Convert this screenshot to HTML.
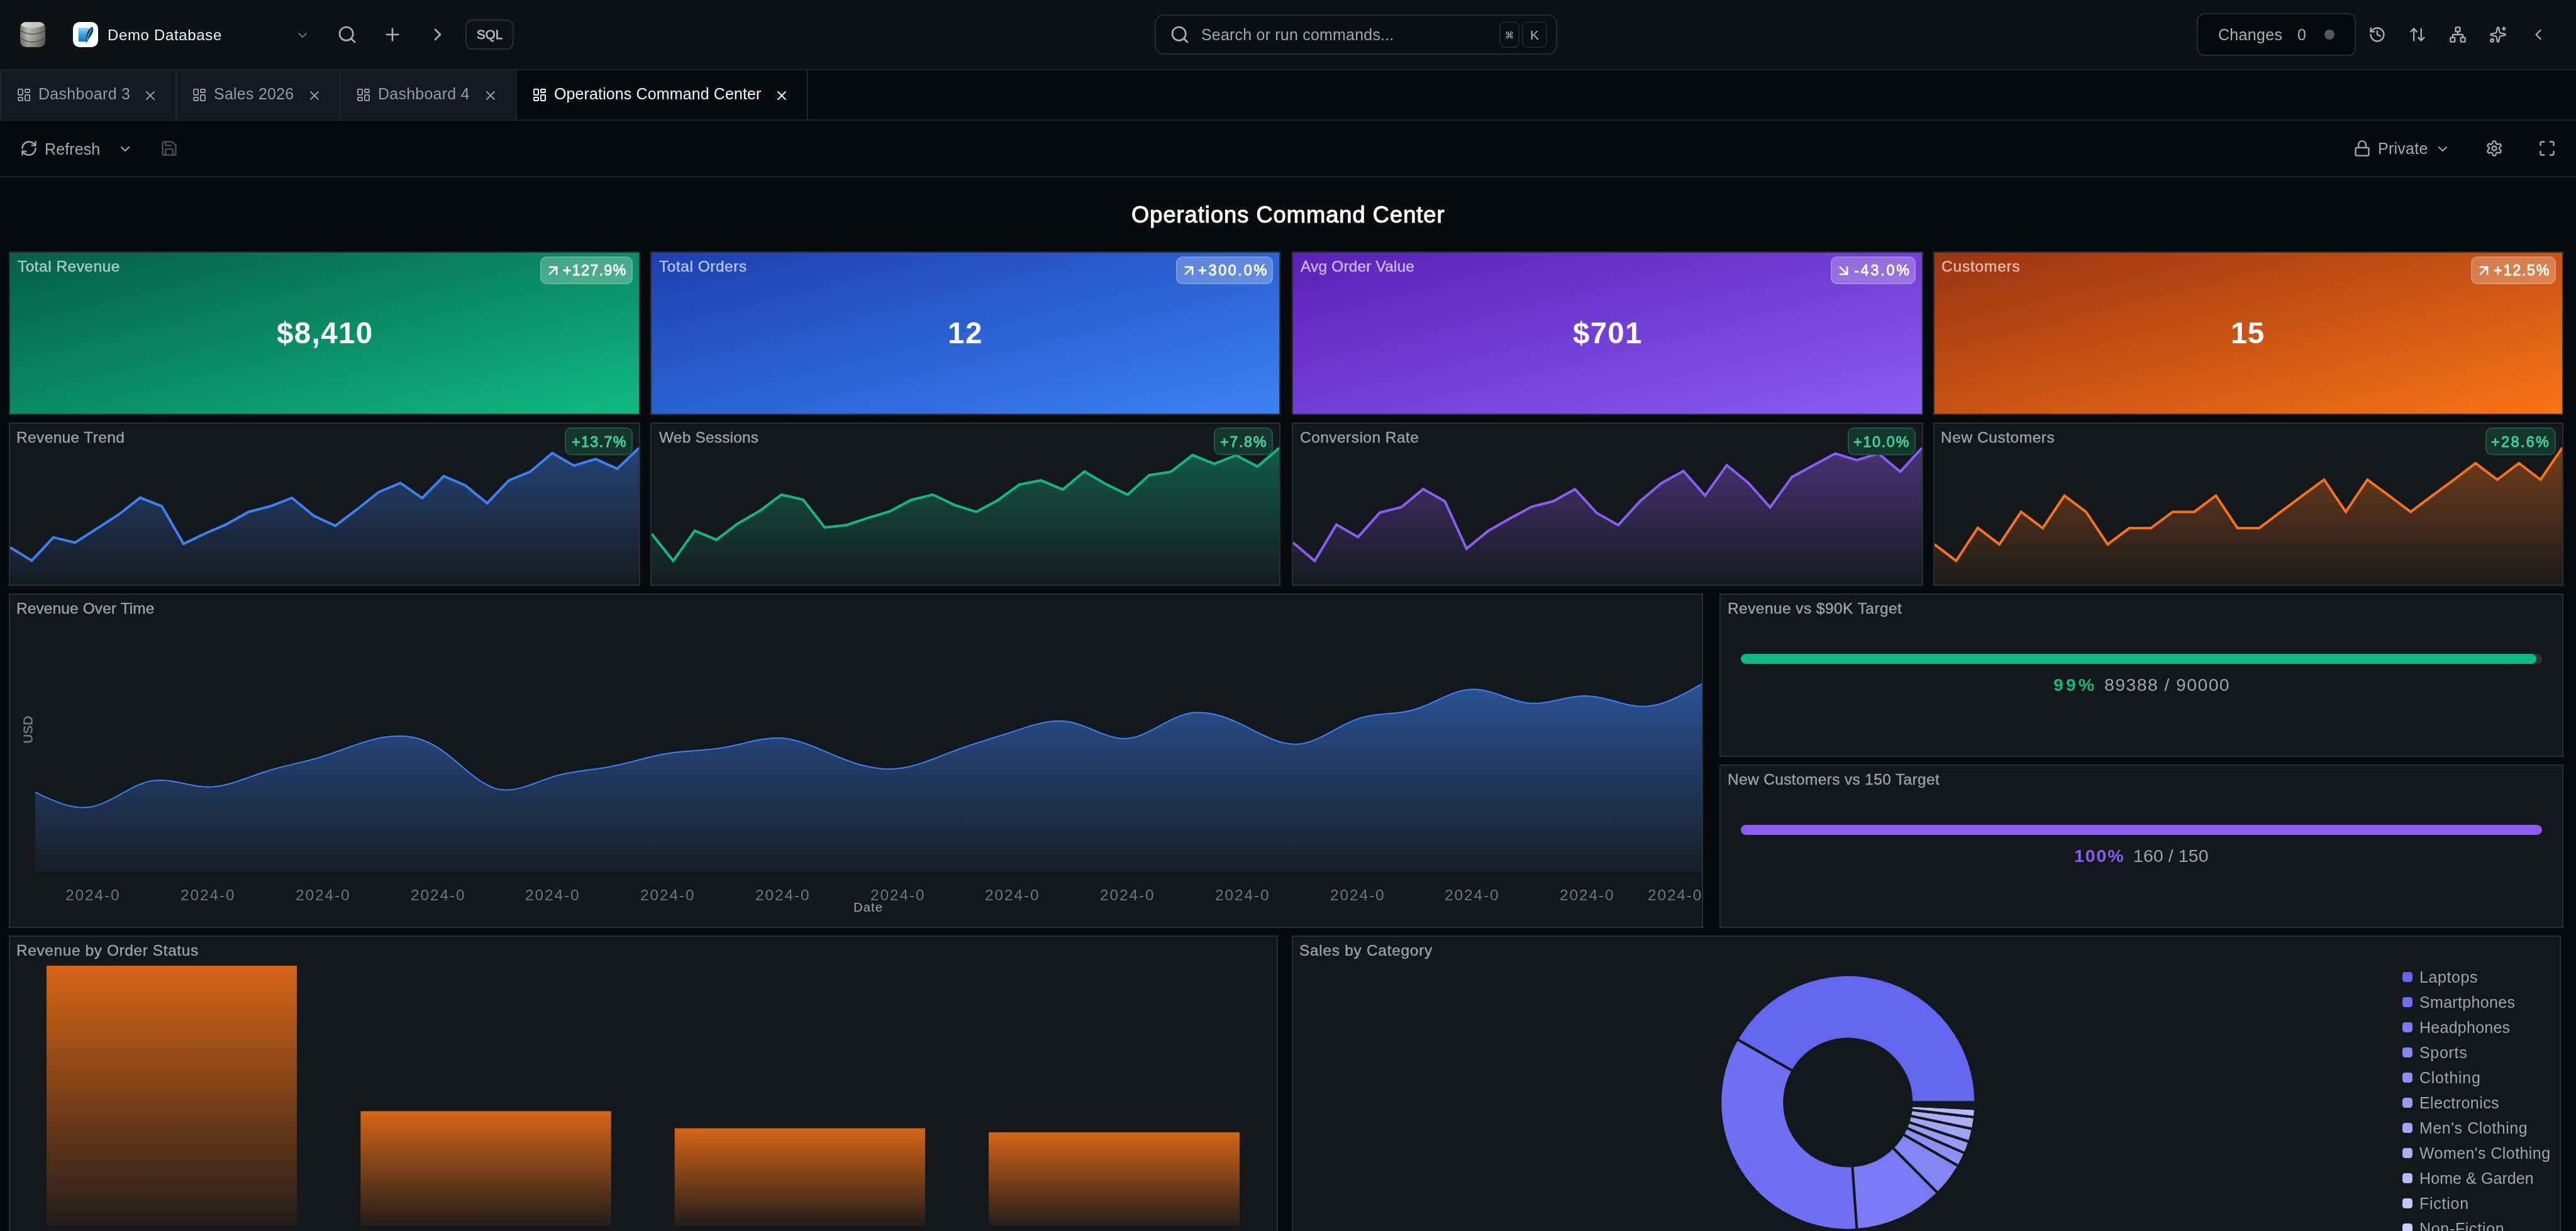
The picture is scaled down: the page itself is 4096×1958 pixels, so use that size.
<!DOCTYPE html>
<html lang="en">
<head>
<meta charset="utf-8">
<title>Operations Command Center</title>
<style>
html,body{margin:0;padding:0;}
body{width:4096px;height:1958px;overflow:hidden;background:#090a0c;font-family:"Liberation Sans",sans-serif;position:relative;}
.t{position:absolute;white-space:nowrap;display:block;will-change:transform;}
.ic{position:absolute;display:block;overflow:visible;}
.abs{position:absolute;box-sizing:border-box;}
.card{position:absolute;box-sizing:border-box;border:2px solid #2a2f36;background:#15181b;overflow:hidden;}
.badge{position:absolute;box-sizing:border-box;border-radius:10px;}
.kbadge{background:rgba(255,255,255,.25);border:2px solid rgba(255,255,255,.16);}
.sbadge{background:#15362d;border:2px solid #1c5743;}
svg{display:block;}
h1,h2{margin:0;font-weight:400;}
@media (max-width:4000px){html{zoom:tan(atan2(100vw,4096px));}}
</style>
</head>
<body>

<header class="abs" style="left:0;top:0;width:4096px;height:112px;background:#0f1113;border-bottom:2px solid #1f242a;">
<svg class="ic" style="left:32px;top:35px" width="40" height="40" viewBox="0 0 40 40">
<defs><linearGradient id="cylb" x1="0" y1="0" x2="1" y2="0"><stop offset="0" stop-color="#77776f"/><stop offset=".3" stop-color="#bdbdb6"/><stop offset=".62" stop-color="#9d9d96"/><stop offset="1" stop-color="#63635d"/></linearGradient>
<linearGradient id="cylt" x1="0" y1="0" x2="1" y2="0"><stop offset="0" stop-color="#dadad5"/><stop offset="1" stop-color="#b9b9b3"/></linearGradient>
<linearGradient id="cyls" x1="0" y1="0" x2="0" y2="1"><stop offset="0" stop-color="#000" stop-opacity="0"/><stop offset=".6" stop-color="#000" stop-opacity=".04"/><stop offset="1" stop-color="#000" stop-opacity=".2"/></linearGradient>
<clipPath id="cylc"><rect x="0" y="0" width="40" height="40" rx="9.5"/></clipPath></defs>
<g clip-path="url(#cylc)">
<rect x="0" y="0" width="40" height="40" fill="url(#cylb)"/>
<rect x="0" y="0" width="40" height="40" fill="url(#cyls)"/>
<path d="M0 0 H40 V4.6 Q20 15.4 0 4.6z" fill="url(#cylt)"/>
<path d="M0 13.6 Q20 25.4 40 13.1" fill="none" stroke="#4a4a45" stroke-width="1.2"/>
<path d="M0 25.3 Q20 38.8 40 24.7" fill="none" stroke="#4a4a45" stroke-width="1.2"/>
</g>
</svg>
<svg class="ic" style="left:116px;top:35px" width="40" height="40" viewBox="0 0 40 40">
<defs><linearGradient id="sqb" x1="0" y1="0" x2="0" y2="1"><stop offset="0" stop-color="#8ad6fb"/><stop offset=".55" stop-color="#2c9be0"/><stop offset="1" stop-color="#0b78c6"/></linearGradient></defs>
<rect width="40" height="40" rx="10.5" fill="#fff"/>
<path d="M10 9.3 H25.5 L22.2 31.2 H10 Q8.7 31.2 8.7 29.9 V10.6 Q8.7 9.3 10 9.3z" fill="url(#sqb)"/>
<path d="M30.4 7.8 C33.6 9.4 32.4 16 29.2 21 C27 24.4 24.4 27.4 22.6 31.4 L21.5 33.6 C20.6 29 20.8 23.6 22.2 18.6 C23.6 13.6 26.6 9 30.4 7.8z" fill="#0b4468"/>
<path d="M30 10.6 C27 15 24.2 21.4 22.4 29.4" fill="none" stroke="#d9effa" stroke-width=".8"/>
</svg>
<span class="t" style="left:171.2px;top:44.2px;font-size:24px;line-height:24px;color:#f2f3f5;letter-spacing:0.65px;">Demo Database</span>
<svg class="ic" style="left:468.5px;top:43.5px" width="24" height="24" viewBox="0 0 24 24" fill="none" stroke="#6b7079" stroke-width="2" stroke-linecap="round" stroke-linejoin="round"><path d="m6 9 6 6 6-6"/></svg>
<svg class="ic" style="left:536.0px;top:39.0px" width="32" height="32" viewBox="0 0 24 24" fill="none" stroke="#aaaeb5" stroke-width="2" stroke-linecap="round" stroke-linejoin="round"><circle cx="11" cy="11" r="8"/><path d="m21 21-4.3-4.3"/></svg>
<svg class="ic" style="left:608.0px;top:39.0px" width="32" height="32" viewBox="0 0 24 24" fill="none" stroke="#aaaeb5" stroke-width="2" stroke-linecap="round" stroke-linejoin="round"><path d="M5 12h14"/><path d="M12 5v14"/></svg>
<svg class="ic" style="left:680.0px;top:39.0px" width="32" height="32" viewBox="0 0 24 24" fill="none" stroke="#aaaeb5" stroke-width="2" stroke-linecap="round" stroke-linejoin="round"><path d="m9 18 6-6-6-6"/></svg>
<div class="abs" style="left:740px;top:31px;width:77px;height:48px;border:2px solid #2a2f36;border-radius:11px;"></div>
<span class="t" style="left:757.8px;top:45.1px;font-size:20.5px;line-height:20.5px;color:#b4b8be;letter-spacing:0.08px;-webkit-text-stroke:.8px #b4b8be;">SQL</span>
<div class="abs" style="left:1836px;top:23px;width:640px;height:64px;border:2px solid #262b31;border-radius:15px;background:#0d0e10;"></div>
<svg class="ic" style="left:1860.0px;top:39.0px" width="32" height="32" viewBox="0 0 24 24" fill="none" stroke="#aaaeb5" stroke-width="2" stroke-linecap="round" stroke-linejoin="round"><circle cx="11" cy="11" r="8"/><path d="m21 21-4.3-4.3"/></svg>
<span class="t" style="left:1909.5px;top:43.3px;font-size:25px;line-height:25px;color:#a0a5ac;letter-spacing:0.20px;">Search or run commands...</span>
<div class="abs" style="left:2384px;top:34px;width:32px;height:42px;border:2px solid #22262c;border-radius:9px;"></div>
<div class="abs" style="left:2420px;top:34px;width:40px;height:42px;border:2px solid #22262c;border-radius:9px;"></div>
<span class="t" style="left:1900.2px;width:1000px;text-align:center;top:48.5px;font-size:14px;line-height:14px;color:#b4b8be;font-family:'DejaVu Sans',sans-serif;">⌘</span>
<span class="t" style="left:1940.3px;width:1000px;text-align:center;top:44.7px;font-size:21px;line-height:21px;color:#b4b8be;">K</span>
<div class="abs" style="left:3493px;top:21px;width:253px;height:68px;border:2px solid #262b31;border-radius:12px;background:#08090b;"></div>
<span class="t" style="left:3526.6px;top:43.2px;font-size:25px;line-height:25px;color:#aaafb6;letter-spacing:0.32px;">Changes</span>
<span class="t" style="left:3652.8px;top:43.2px;font-size:25px;line-height:25px;color:#aaafb6;">0</span>
<div class="abs" style="left:3696px;top:47px;width:16px;height:16px;border-radius:50%;background:#55585f;"></div>
<svg class="ic" style="left:3766.0px;top:41.0px" width="28" height="28" viewBox="0 0 24 24" fill="none" stroke="#aaaeb5" stroke-width="2" stroke-linecap="round" stroke-linejoin="round"><path d="M3 12a9 9 0 1 0 9-9 9.75 9.75 0 0 0-6.74 2.74L3 8"/><path d="M3 3v5h5"/><path d="M12 7v5l4 2"/></svg>
<svg class="ic" style="left:3830.0px;top:41.0px" width="28" height="28" viewBox="0 0 24 24" fill="none" stroke="#aaaeb5" stroke-width="2" stroke-linecap="round" stroke-linejoin="round"><path d="m21 16-4 4-4-4"/><path d="M17 20V4"/><path d="m3 8 4-4 4 4"/><path d="M7 4v16"/></svg>
<svg class="ic" style="left:3894.0px;top:41.0px" width="28" height="28" viewBox="0 0 24 24" fill="none" stroke="#aaaeb5" stroke-width="2" stroke-linecap="round" stroke-linejoin="round"><rect x="16" y="16" width="6" height="6" rx="1"/><rect x="2" y="16" width="6" height="6" rx="1"/><rect x="9" y="2" width="6" height="6" rx="1"/><path d="M5 16v-3a1 1 0 0 1 1-1h12a1 1 0 0 1 1 1v3"/><path d="M12 12V8"/></svg>
<svg class="ic" style="left:3958.0px;top:41.0px" width="28" height="28" viewBox="0 0 24 24" fill="none" stroke="#aaaeb5" stroke-width="2" stroke-linecap="round" stroke-linejoin="round"><path d="M11.017 2.814a1 1 0 0 1 1.966 0l1.051 5.558a2 2 0 0 0 1.594 1.594l5.558 1.051a1 1 0 0 1 0 1.966l-5.558 1.051a2 2 0 0 0-1.594 1.594l-1.051 5.558a1 1 0 0 1-1.966 0l-1.051-5.558a2 2 0 0 0-1.594-1.594l-5.558-1.051a1 1 0 0 1 0-1.966l5.558-1.051a2 2 0 0 0 1.594-1.594z"/><path d="M20 2v4"/><path d="M22 4h-4"/><circle cx="4" cy="20" r="2"/></svg>
<svg class="ic" style="left:4022.0px;top:41.0px" width="28" height="28" viewBox="0 0 24 24" fill="none" stroke="#aaaeb5" stroke-width="2" stroke-linecap="round" stroke-linejoin="round"><path d="m15 18-6-6 6-6"/></svg>
</header>
<nav class="abs" style="left:0;top:112px;width:4096px;height:80px;background:#090a0c;border-bottom:2px solid #1f242a;">
<div class="abs" style="left:0;top:0;width:2px;height:78px;background:#24282d;"></div>
<div class="abs" style="left:2px;top:0;width:279px;height:78px;background:#16191d;border-right:2px solid #24282d;"></div>
<svg class="ic" style="left:26.0px;top:27.0px" width="24" height="24" viewBox="0 0 24 24" fill="none" stroke="#969ba3" stroke-width="2" stroke-linecap="round" stroke-linejoin="round"><rect width="7" height="9" x="3" y="3" rx="1"/><rect width="7" height="5" x="14" y="3" rx="1"/><rect width="7" height="9" x="14" y="12" rx="1"/><rect width="7" height="5" x="3" y="16" rx="1"/></svg>
<span class="t" style="left:60.9px;top:24.9px;font-size:25px;line-height:25px;color:#969ba3;letter-spacing:0.28px;">Dashboard 3</span>
<svg class="ic" style="left:227.0px;top:27.5px" width="24" height="24" viewBox="0 0 24 24" fill="none" stroke="#969ba3" stroke-width="2" stroke-linecap="round" stroke-linejoin="round"><path d="M18 6 6 18"/><path d="m6 6 12 12"/></svg>
<div class="abs" style="left:281px;top:0;width:261px;height:78px;background:#16191d;border-right:2px solid #24282d;"></div>
<svg class="ic" style="left:305.0px;top:27.0px" width="24" height="24" viewBox="0 0 24 24" fill="none" stroke="#969ba3" stroke-width="2" stroke-linecap="round" stroke-linejoin="round"><rect width="7" height="9" x="3" y="3" rx="1"/><rect width="7" height="5" x="14" y="3" rx="1"/><rect width="7" height="9" x="14" y="12" rx="1"/><rect width="7" height="5" x="3" y="16" rx="1"/></svg>
<span class="t" style="left:340.4px;top:24.9px;font-size:25px;line-height:25px;color:#969ba3;letter-spacing:0.24px;">Sales 2026</span>
<svg class="ic" style="left:488.0px;top:27.5px" width="24" height="24" viewBox="0 0 24 24" fill="none" stroke="#969ba3" stroke-width="2" stroke-linecap="round" stroke-linejoin="round"><path d="M18 6 6 18"/><path d="m6 6 12 12"/></svg>
<div class="abs" style="left:542px;top:0;width:280px;height:78px;background:#16191d;border-right:2px solid #24282d;"></div>
<svg class="ic" style="left:566.0px;top:27.0px" width="24" height="24" viewBox="0 0 24 24" fill="none" stroke="#969ba3" stroke-width="2" stroke-linecap="round" stroke-linejoin="round"><rect width="7" height="9" x="3" y="3" rx="1"/><rect width="7" height="5" x="14" y="3" rx="1"/><rect width="7" height="9" x="14" y="12" rx="1"/><rect width="7" height="5" x="3" y="16" rx="1"/></svg>
<span class="t" style="left:601.0px;top:24.9px;font-size:25px;line-height:25px;color:#969ba3;letter-spacing:0.23px;">Dashboard 4</span>
<svg class="ic" style="left:768.0px;top:27.5px" width="24" height="24" viewBox="0 0 24 24" fill="none" stroke="#969ba3" stroke-width="2" stroke-linecap="round" stroke-linejoin="round"><path d="M18 6 6 18"/><path d="m6 6 12 12"/></svg>
<div class="abs" style="left:822px;top:0;width:463px;height:78px;background:#090a0c;border-right:2px solid #24282d;"></div>
<svg class="ic" style="left:846.0px;top:27.0px" width="24" height="24" viewBox="0 0 24 24" fill="none" stroke="#f5f6f7" stroke-width="2" stroke-linecap="round" stroke-linejoin="round"><rect width="7" height="9" x="3" y="3" rx="1"/><rect width="7" height="5" x="14" y="3" rx="1"/><rect width="7" height="9" x="14" y="12" rx="1"/><rect width="7" height="5" x="3" y="16" rx="1"/></svg>
<span class="t" style="left:880.8px;top:24.9px;font-size:25px;line-height:25px;color:#f5f6f7;letter-spacing:0.12px;">Operations Command Center</span>
<svg class="ic" style="left:1231.0px;top:27.5px" width="24" height="24" viewBox="0 0 24 24" fill="none" stroke="#f5f6f7" stroke-width="2" stroke-linecap="round" stroke-linejoin="round"><path d="M18 6 6 18"/><path d="m6 6 12 12"/></svg>
</nav>
<div class="abs" style="left:0;top:192px;width:4096px;height:90px;background:#090a0c;border-bottom:2px solid #1f242a;">
<svg class="ic" style="left:31.5px;top:30.0px" width="28" height="28" viewBox="0 0 24 24" fill="none" stroke="#a5aab1" stroke-width="2" stroke-linecap="round" stroke-linejoin="round"><path d="M3 12a9 9 0 0 1 9-9 9.75 9.75 0 0 1 6.74 2.74L21 8"/><path d="M21 3v5h-5"/><path d="M21 12a9 9 0 0 1-9 9 9.75 9.75 0 0 1-6.74-2.74L3 16"/><path d="M8 16H3v5"/></svg>
<span class="t" style="left:71.4px;top:32.7px;font-size:25px;line-height:25px;color:#a5aab1;letter-spacing:0.10px;">Refresh</span>
<svg class="ic" style="left:187.0px;top:32.5px" width="24" height="24" viewBox="0 0 24 24" fill="none" stroke="#a5aab1" stroke-width="2" stroke-linecap="round" stroke-linejoin="round"><path d="m6 9 6 6 6-6"/></svg>
<svg class="ic" style="left:255.0px;top:30.0px" width="28" height="28" viewBox="0 0 24 24" fill="none" stroke="#4b5058" stroke-width="2" stroke-linecap="round" stroke-linejoin="round"><path d="M15.2 3a2 2 0 0 1 1.4.6l3.8 3.8a2 2 0 0 1 .6 1.4V19a2 2 0 0 1-2 2H5a2 2 0 0 1-2-2V5a2 2 0 0 1 2-2z"/><path d="M17 21v-7a1 1 0 0 0-1-1H8a1 1 0 0 0-1 1v7"/><path d="M7 3v4a1 1 0 0 0 1 1h7"/></svg>
<svg class="ic" style="left:3741.5px;top:30.0px" width="28" height="28" viewBox="0 0 24 24" fill="none" stroke="#a5aab1" stroke-width="2" stroke-linecap="round" stroke-linejoin="round"><rect width="18" height="11" x="3" y="11" rx="2" ry="2"/><path d="M7 11V7a5 5 0 0 1 10 0v4"/></svg>
<span class="t" style="left:3781.0px;top:32.1px;font-size:25px;line-height:25px;color:#a5aab1;letter-spacing:0.26px;">Private</span>
<svg class="ic" style="left:3872.0px;top:32.5px" width="24" height="24" viewBox="0 0 24 24" fill="none" stroke="#a5aab1" stroke-width="2" stroke-linecap="round" stroke-linejoin="round"><path d="m6 9 6 6 6-6"/></svg>
<svg class="ic" style="left:3952.0px;top:30.0px" width="28" height="28" viewBox="0 0 24 24" fill="none" stroke="#a5aab1" stroke-width="2" stroke-linecap="round" stroke-linejoin="round"><path d="M12.22 2h-.44a2 2 0 0 0-2 2v.18a2 2 0 0 1-1 1.73l-.43.25a2 2 0 0 1-2 0l-.15-.08a2 2 0 0 0-2.73.73l-.22.38a2 2 0 0 0 .73 2.73l.15.1a2 2 0 0 1 1 1.72v.51a2 2 0 0 1-1 1.74l-.15.09a2 2 0 0 0-.73 2.73l.22.38a2 2 0 0 0 2.73.73l.15-.08a2 2 0 0 1 2 0l.43.25a2 2 0 0 1 1 1.73V20a2 2 0 0 0 2 2h.44a2 2 0 0 0 2-2v-.18a2 2 0 0 1 1-1.73l.43-.25a2 2 0 0 1 2 0l.15.08a2 2 0 0 0 2.73-.73l.22-.39a2 2 0 0 0-.73-2.73l-.15-.08a2 2 0 0 1-1-1.74v-.5a2 2 0 0 1 1-1.74l.15-.09a2 2 0 0 0 .73-2.73l-.22-.38a2 2 0 0 0-2.73-.73l-.15.08a2 2 0 0 1-2 0l-.43-.25a2 2 0 0 1-1-1.73V4a2 2 0 0 0-2-2z"/><circle cx="12" cy="12" r="3"/></svg>
<svg class="ic" style="left:4036.0px;top:30.0px" width="28" height="28" viewBox="0 0 24 24" fill="none" stroke="#a5aab1" stroke-width="2" stroke-linecap="round" stroke-linejoin="round"><path d="M8 3H5a2 2 0 0 0-2 2v3"/><path d="M21 8V5a2 2 0 0 0-2-2h-3"/><path d="M3 16v3a2 2 0 0 0 2 2h3"/><path d="M16 21h3a2 2 0 0 0 2-2v-3"/></svg>
</div>
<main>
<h1 class="t" style="left:1798.7px;top:323.7px;font-size:36.3px;line-height:36.3px;color:#ffffff;letter-spacing:0.98px;-webkit-text-stroke:1.05px #fff;">Operations Command Center</h1>
<section class="card" style="left:14px;top:400px;width:1004px;height:260px;background:linear-gradient(to bottom right,#065f46 0%,#10b981 100%);">
<h2 class="t" style="left:12.1px;top:9.5px;font-size:24.5px;line-height:24.5px;color:#fff;letter-spacing:0.47px;opacity:.66;-webkit-text-stroke:.45px #fff;">Total Revenue</h2>
<span class="t" style="left:424.1px;top:104.0px;font-size:47.5px;line-height:47.5px;color:#ffffff;font-weight:700;letter-spacing:1.38px;">$8,410</span>
<div class="badge kbadge" style="left:843px;top:6px;width:147px;height:44px;"></div>
<svg class="ic" style="left:849.5px;top:15.3px" width="27" height="27" viewBox="0 0 24 24" fill="none" stroke="#ffffff" stroke-width="2.3" stroke-linecap="round" stroke-linejoin="round"><path d="M7 7h10v10"/><path d="M7 17 17 7"/></svg>
<span class="t" style="left:879.2px;top:17.3px;font-size:23.5px;line-height:23.5px;color:#ffffff;letter-spacing:1.15px;-webkit-text-stroke:.85px #fff;">+127.9%</span>
</section>
<section class="card" style="left:1034px;top:400px;width:1002px;height:260px;background:linear-gradient(to bottom right,#1e40af 0%,#3b82f6 100%);">
<h2 class="t" style="left:11.8px;top:9.5px;font-size:24.5px;line-height:24.5px;color:#fff;letter-spacing:0.52px;opacity:.66;-webkit-text-stroke:.45px #fff;">Total Orders</h2>
<span class="t" style="left:471.2px;top:104.0px;font-size:47.5px;line-height:47.5px;color:#ffffff;font-weight:700;letter-spacing:1.60px;">12</span>
<div class="badge kbadge" style="left:834px;top:6px;width:154px;height:44px;"></div>
<svg class="ic" style="left:840.5px;top:15.3px" width="27" height="27" viewBox="0 0 24 24" fill="none" stroke="#ffffff" stroke-width="2.3" stroke-linecap="round" stroke-linejoin="round"><path d="M7 7h10v10"/><path d="M7 17 17 7"/></svg>
<span class="t" style="left:868.5px;top:17.3px;font-size:23.5px;line-height:23.5px;color:#ffffff;letter-spacing:2.67px;-webkit-text-stroke:.85px #fff;">+300.0%</span>
</section>
<section class="card" style="left:2054px;top:400px;width:1004px;height:260px;background:linear-gradient(to bottom right,#5b21b6 0%,#8b5cf6 100%);">
<h2 class="t" style="left:12.4px;top:9.5px;font-size:24.5px;line-height:24.5px;color:#fff;letter-spacing:0.15px;opacity:.66;-webkit-text-stroke:.45px #fff;">Avg Order Value</h2>
<span class="t" style="left:445.1px;top:104.0px;font-size:47.5px;line-height:47.5px;color:#ffffff;font-weight:700;letter-spacing:1.23px;">$701</span>
<div class="badge kbadge" style="left:855px;top:6px;width:135px;height:44px;"></div>
<svg class="ic" style="left:861.5px;top:15.3px" width="27" height="27" viewBox="0 0 24 24" fill="none" stroke="#ffffff" stroke-width="2.3" stroke-linecap="round" stroke-linejoin="round"><path d="m7 7 10 10"/><path d="M17 7v10H7"/></svg>
<span class="t" style="left:891.8px;top:17.3px;font-size:23.5px;line-height:23.5px;color:#ffffff;letter-spacing:2.74px;-webkit-text-stroke:.85px #fff;">-43.0%</span>
</section>
<section class="card" style="left:3074px;top:400px;width:1002px;height:260px;background:linear-gradient(to bottom right,#9a3412 0%,#f97316 100%);">
<h2 class="t" style="left:11.3px;top:9.5px;font-size:24.5px;line-height:24.5px;color:#fff;letter-spacing:0.79px;opacity:.66;-webkit-text-stroke:.45px #fff;">Customers</h2>
<span class="t" style="left:471.3px;top:104.0px;font-size:47.5px;line-height:47.5px;color:#ffffff;font-weight:700;letter-spacing:0.40px;">15</span>
<div class="badge kbadge" style="left:853px;top:6px;width:135px;height:44px;"></div>
<svg class="ic" style="left:859.5px;top:15.3px" width="27" height="27" viewBox="0 0 24 24" fill="none" stroke="#ffffff" stroke-width="2.3" stroke-linecap="round" stroke-linejoin="round"><path d="M7 7h10v10"/><path d="M7 17 17 7"/></svg>
<span class="t" style="left:888.8px;top:17.3px;font-size:23.5px;line-height:23.5px;color:#ffffff;letter-spacing:1.68px;-webkit-text-stroke:.85px #fff;">+12.5%</span>
</section>
<section class="card" style="left:14px;top:672px;width:1004px;height:260px;">
<svg class="ic" style="left:0;top:0" width="1000" height="256" viewBox="0 0 1000 256"><defs><linearGradient id="sg0" x1="0" y1="38" x2="0" y2="256" gradientUnits="userSpaceOnUse"><stop offset="0" stop-color="#3b82f6" stop-opacity=".42"/><stop offset="1" stop-color="#3b82f6" stop-opacity=".025"/></linearGradient></defs><polygon points="0,256 0.0,196.7 34.5,217.7 69.0,180.6 103.4,189.1 137.9,166.9 172.4,144.7 206.9,117.6 241.4,131.3 275.9,191.1 310.3,174.5 344.8,159.6 379.3,140.2 413.8,131.3 448.3,118.0 482.8,146.3 517.2,162.4 551.7,136.2 586.2,108.7 620.7,94.2 655.2,118.4 689.7,83.3 724.1,98.2 758.6,126.5 793.1,90.2 827.6,76.0 862.1,46.6 896.6,66.7 931.0,56.2 965.5,71.6 1000.0,38.5 1000,256" fill="url(#sg0)"/><polyline points="0.0,196.7 34.5,217.7 69.0,180.6 103.4,189.1 137.9,166.9 172.4,144.7 206.9,117.6 241.4,131.3 275.9,191.1 310.3,174.5 344.8,159.6 379.3,140.2 413.8,131.3 448.3,118.0 482.8,146.3 517.2,162.4 551.7,136.2 586.2,108.7 620.7,94.2 655.2,118.4 689.7,83.3 724.1,98.2 758.6,126.5 793.1,90.2 827.6,76.0 862.1,46.6 896.6,66.7 931.0,56.2 965.5,71.6 1000.0,38.5" fill="none" stroke="#3b82f6" stroke-width="4" stroke-linejoin="miter"/></svg>
<h2 class="t" style="left:10.3px;top:9.5px;font-size:24.5px;line-height:24.5px;color:#9d9fa4;letter-spacing:0.36px;-webkit-text-stroke:.45px #9d9fa4;">Revenue Trend</h2>
<div class="badge sbadge" style="left:882px;top:6px;width:108px;height:44px;"></div>
<span class="t" style="left:892.5px;top:17.6px;font-size:23.5px;line-height:23.5px;color:#3fd39a;letter-spacing:1.28px;-webkit-text-stroke:.85px #3fd39a;">+13.7%</span>
</section>
<section class="card" style="left:1034px;top:672px;width:1002px;height:260px;">
<svg class="ic" style="left:0;top:0" width="998" height="256" viewBox="0 0 998 256"><defs><linearGradient id="sg1" x1="0" y1="38" x2="0" y2="256" gradientUnits="userSpaceOnUse"><stop offset="0" stop-color="#10b981" stop-opacity=".42"/><stop offset="1" stop-color="#10b981" stop-opacity=".025"/></linearGradient></defs><polygon points="0,256 0.0,174.9 34.4,218.1 68.8,170.1 103.2,184.6 137.7,158.4 172.1,138.6 206.5,112.8 240.9,120.8 275.3,164.9 309.7,161.2 344.1,149.9 378.6,139.4 413.0,121.2 447.4,112.8 481.8,129.3 516.2,140.2 550.6,121.7 585.0,96.6 619.4,90.2 653.9,104.7 688.3,76.0 722.7,96.2 757.1,112.8 791.5,81.7 825.9,76.4 860.3,49.8 894.8,63.9 929.2,50.2 963.6,68.0 998.0,38.5 998,256" fill="url(#sg1)"/><polyline points="0.0,174.9 34.4,218.1 68.8,170.1 103.2,184.6 137.7,158.4 172.1,138.6 206.5,112.8 240.9,120.8 275.3,164.9 309.7,161.2 344.1,149.9 378.6,139.4 413.0,121.2 447.4,112.8 481.8,129.3 516.2,140.2 550.6,121.7 585.0,96.6 619.4,90.2 653.9,104.7 688.3,76.0 722.7,96.2 757.1,112.8 791.5,81.7 825.9,76.4 860.3,49.8 894.8,63.9 929.2,50.2 963.6,68.0 998.0,38.5" fill="none" stroke="#10b981" stroke-width="4" stroke-linejoin="miter"/></svg>
<h2 class="t" style="left:12.3px;top:9.5px;font-size:24.5px;line-height:24.5px;color:#9d9fa4;letter-spacing:0.17px;-webkit-text-stroke:.45px #9d9fa4;">Web Sessions</h2>
<div class="badge sbadge" style="left:894px;top:6px;width:94px;height:44px;"></div>
<span class="t" style="left:903.5px;top:17.6px;font-size:23.5px;line-height:23.5px;color:#3fd39a;letter-spacing:1.57px;-webkit-text-stroke:.85px #3fd39a;">+7.8%</span>
</section>
<section class="card" style="left:2054px;top:672px;width:1004px;height:260px;">
<svg class="ic" style="left:0;top:0" width="1000" height="256" viewBox="0 0 1000 256"><defs><linearGradient id="sg2" x1="0" y1="38" x2="0" y2="256" gradientUnits="userSpaceOnUse"><stop offset="0" stop-color="#8b5cf6" stop-opacity=".42"/><stop offset="1" stop-color="#8b5cf6" stop-opacity=".025"/></linearGradient></defs><polygon points="0,256 0.0,189.1 34.5,218.1 69.0,160.4 103.4,180.2 137.9,141.4 172.4,132.6 206.9,103.9 241.4,123.3 275.9,198.8 310.3,170.5 344.8,150.7 379.3,132.1 413.8,123.3 448.3,103.9 482.8,141.8 517.2,161.2 551.7,123.3 586.2,94.2 620.7,75.2 655.2,114.4 689.7,65.9 724.1,94.2 758.6,133.0 793.1,84.9 827.6,65.9 862.1,47.4 896.6,57.9 931.0,47.4 965.5,76.4 1000.0,38.5 1000,256" fill="url(#sg2)"/><polyline points="0.0,189.1 34.5,218.1 69.0,160.4 103.4,180.2 137.9,141.4 172.4,132.6 206.9,103.9 241.4,123.3 275.9,198.8 310.3,170.5 344.8,150.7 379.3,132.1 413.8,123.3 448.3,103.9 482.8,141.8 517.2,161.2 551.7,123.3 586.2,94.2 620.7,75.2 655.2,114.4 689.7,65.9 724.1,94.2 758.6,133.0 793.1,84.9 827.6,65.9 862.1,47.4 896.6,57.9 931.0,47.4 965.5,76.4 1000.0,38.5" fill="none" stroke="#8b5cf6" stroke-width="4" stroke-linejoin="miter"/></svg>
<h2 class="t" style="left:11.1px;top:9.5px;font-size:24.5px;line-height:24.5px;color:#9d9fa4;letter-spacing:0.46px;-webkit-text-stroke:.45px #9d9fa4;">Conversion Rate</h2>
<div class="badge sbadge" style="left:882px;top:6px;width:108px;height:44px;"></div>
<span class="t" style="left:890.5px;top:17.6px;font-size:23.5px;line-height:23.5px;color:#3fd39a;letter-spacing:1.60px;-webkit-text-stroke:.85px #3fd39a;">+10.0%</span>
</section>
<section class="card" style="left:3074px;top:672px;width:1002px;height:260px;">
<svg class="ic" style="left:0;top:0" width="998" height="256" viewBox="0 0 998 256"><defs><linearGradient id="sg3" x1="0" y1="38" x2="0" y2="256" gradientUnits="userSpaceOnUse"><stop offset="0" stop-color="#f97316" stop-opacity=".42"/><stop offset="1" stop-color="#f97316" stop-opacity=".025"/></linearGradient></defs><polygon points="0,256 0.0,191.9 34.4,218.1 68.8,165.7 103.2,191.9 137.7,140.2 172.1,166.1 206.5,114.4 240.9,140.2 275.3,191.9 309.7,166.1 344.1,166.1 378.6,140.2 413.0,140.2 447.4,114.4 481.8,166.1 516.2,166.1 550.6,140.2 585.0,114.4 619.4,89.0 653.9,140.2 688.3,89.0 722.7,114.4 757.1,140.2 791.5,114.4 825.9,89.0 860.3,62.7 894.8,89.0 929.2,62.7 963.6,89.0 998.0,38.5 998,256" fill="url(#sg3)"/><polyline points="0.0,191.9 34.4,218.1 68.8,165.7 103.2,191.9 137.7,140.2 172.1,166.1 206.5,114.4 240.9,140.2 275.3,191.9 309.7,166.1 344.1,166.1 378.6,140.2 413.0,140.2 447.4,114.4 481.8,166.1 516.2,166.1 550.6,140.2 585.0,114.4 619.4,89.0 653.9,140.2 688.3,89.0 722.7,114.4 757.1,140.2 791.5,114.4 825.9,89.0 860.3,62.7 894.8,89.0 929.2,62.7 963.6,89.0 998.0,38.5" fill="none" stroke="#f97316" stroke-width="4" stroke-linejoin="miter"/></svg>
<h2 class="t" style="left:10.3px;top:9.5px;font-size:24.5px;line-height:24.5px;color:#9d9fa4;letter-spacing:0.54px;-webkit-text-stroke:.45px #9d9fa4;">New Customers</h2>
<div class="badge sbadge" style="left:876px;top:6px;width:112px;height:44px;"></div>
<span class="t" style="left:885.3px;top:17.6px;font-size:23.5px;line-height:23.5px;color:#3fd39a;letter-spacing:2.32px;-webkit-text-stroke:.85px #3fd39a;">+28.6%</span>
</section>
<section class="card" style="left:14px;top:944px;width:2694px;height:532px;">
<h2 class="t" style="left:10.3px;top:9.5px;font-size:24.5px;line-height:24.5px;color:#9d9fa4;letter-spacing:0.10px;-webkit-text-stroke:.45px #9d9fa4;">Revenue Over Time</h2>
<svg class="ic" style="left:0;top:0" width="2690" height="528" viewBox="0 0 2690 528"><defs><linearGradient id="rot" x1="0" y1="141.6" x2="0" y2="440" gradientUnits="userSpaceOnUse"><stop offset="0" stop-color="#3b82f6" stop-opacity=".56"/><stop offset="1" stop-color="#3b82f6" stop-opacity=".06"/></linearGradient></defs><path d="M40.0,314.0 L47.6,317.7 L55.2,321.3 L62.8,324.7 L70.5,327.9 L78.1,330.9 L85.7,333.4 L93.3,335.5 L100.9,337.1 L108.5,338.2 L116.1,338.5 L123.8,338.1 L131.4,336.9 L139.0,334.9 L146.6,332.1 L154.2,328.7 L161.8,324.9 L169.5,320.8 L177.1,316.6 L184.7,312.3 L192.3,308.3 L199.9,304.5 L207.5,301.2 L215.1,298.4 L222.8,296.4 L230.4,295.3 L238.0,294.9 L245.6,295.2 L253.2,296.0 L260.8,297.2 L268.4,298.6 L276.1,300.2 L283.7,301.8 L291.3,303.2 L298.9,304.5 L306.5,305.3 L314.1,305.7 L321.8,305.4 L329.4,304.7 L337.0,303.4 L344.6,301.7 L352.2,299.7 L359.8,297.4 L367.4,294.8 L375.1,292.2 L382.7,289.4 L390.3,286.7 L397.9,284.0 L405.5,281.5 L413.1,279.1 L420.7,276.9 L428.4,274.9 L436.0,272.9 L443.6,271.1 L451.2,269.2 L458.8,267.4 L466.4,265.6 L474.1,263.7 L481.7,261.7 L489.3,259.6 L496.9,257.3 L504.5,254.8 L512.1,252.2 L519.7,249.5 L527.4,246.8 L535.0,244.0 L542.6,241.3 L550.2,238.6 L557.8,236.0 L565.4,233.6 L573.0,231.4 L580.7,229.5 L588.3,227.8 L595.9,226.5 L603.5,225.5 L611.1,224.9 L618.7,224.7 L626.4,225.0 L634.0,225.8 L641.6,227.1 L649.2,229.0 L656.8,231.5 L664.4,234.6 L672.0,238.3 L679.7,242.8 L687.3,247.9 L694.9,253.6 L702.5,259.7 L710.1,266.1 L717.7,272.6 L725.3,279.0 L733.0,285.2 L740.6,291.1 L748.2,296.5 L755.8,301.1 L763.4,305.0 L771.0,307.9 L778.6,309.7 L786.3,310.4 L793.9,310.3 L801.5,309.5 L809.1,307.9 L816.7,305.9 L824.3,303.5 L832.0,300.8 L839.6,298.0 L847.2,295.1 L854.8,292.4 L862.4,289.8 L870.0,287.6 L877.6,285.7 L885.3,284.1 L892.9,282.7 L900.5,281.4 L908.1,280.3 L915.7,279.3 L923.3,278.2 L930.9,277.2 L938.6,276.1 L946.2,274.9 L953.8,273.6 L961.4,272.0 L969.0,270.3 L976.6,268.5 L984.3,266.6 L991.9,264.7 L999.5,262.7 L1007.1,260.7 L1014.7,258.8 L1022.3,257.0 L1029.9,255.3 L1037.6,253.8 L1045.2,252.4 L1052.8,251.3 L1060.4,250.4 L1068.0,249.6 L1075.6,249.0 L1083.2,248.4 L1090.9,247.8 L1098.5,247.2 L1106.1,246.6 L1113.7,245.9 L1121.3,245.0 L1128.9,244.0 L1136.6,242.8 L1144.2,241.3 L1151.8,239.6 L1159.4,237.9 L1167.0,236.1 L1174.6,234.3 L1182.2,232.6 L1189.9,231.1 L1197.5,229.8 L1205.1,228.8 L1212.7,228.1 L1220.3,227.9 L1227.9,228.2 L1235.5,229.1 L1243.2,230.5 L1250.8,232.3 L1258.4,234.6 L1266.0,237.1 L1273.6,239.9 L1281.2,243.0 L1288.9,246.1 L1296.5,249.4 L1304.1,252.7 L1311.7,255.9 L1319.3,259.0 L1326.9,262.0 L1334.5,264.8 L1342.2,267.4 L1349.8,269.7 L1357.4,271.8 L1365.0,273.5 L1372.6,275.0 L1380.2,276.1 L1387.8,276.9 L1395.5,277.2 L1403.1,277.2 L1410.7,276.6 L1418.3,275.7 L1425.9,274.3 L1433.5,272.5 L1441.1,270.4 L1448.8,268.1 L1456.4,265.5 L1464.0,262.7 L1471.6,259.9 L1479.2,256.9 L1486.8,253.9 L1494.5,250.9 L1502.1,248.0 L1509.7,245.3 L1517.3,242.6 L1524.9,240.0 L1532.5,237.5 L1540.1,235.0 L1547.8,232.6 L1555.4,230.2 L1563.0,227.8 L1570.6,225.4 L1578.2,223.0 L1585.8,220.6 L1593.4,218.1 L1601.1,215.6 L1608.7,213.1 L1616.3,210.6 L1623.9,208.3 L1631.5,206.2 L1639.1,204.3 L1646.8,202.8 L1654.4,201.6 L1662.0,200.9 L1669.6,200.8 L1677.2,201.2 L1684.8,202.3 L1692.4,204.0 L1700.1,206.4 L1707.7,209.1 L1715.3,212.2 L1722.9,215.3 L1730.5,218.5 L1738.1,221.4 L1745.7,224.1 L1753.4,226.3 L1761.0,227.9 L1768.6,228.7 L1776.2,228.7 L1783.8,227.6 L1791.4,225.7 L1799.1,223.0 L1806.7,219.7 L1814.3,215.9 L1821.9,211.9 L1829.5,207.8 L1837.1,203.7 L1844.7,199.7 L1852.4,196.1 L1860.0,192.9 L1867.6,190.4 L1875.2,188.6 L1882.8,187.6 L1890.4,187.2 L1898.0,187.5 L1905.7,188.4 L1913.3,189.8 L1920.9,191.7 L1928.5,194.0 L1936.1,196.7 L1943.7,199.8 L1951.4,203.1 L1959.0,206.7 L1966.6,210.4 L1974.2,214.3 L1981.8,218.2 L1989.4,221.9 L1997.0,225.5 L2004.7,228.8 L2012.3,231.7 L2019.9,234.2 L2027.5,236.1 L2035.1,237.3 L2042.7,237.8 L2050.3,237.5 L2058.0,236.2 L2065.6,234.2 L2073.2,231.4 L2080.8,228.2 L2088.4,224.5 L2096.0,220.5 L2103.6,216.4 L2111.3,212.2 L2118.9,208.1 L2126.5,204.3 L2134.1,200.9 L2141.7,197.9 L2149.3,195.5 L2157.0,193.6 L2164.6,192.2 L2172.2,191.1 L2179.8,190.3 L2187.4,189.5 L2195.0,188.8 L2202.6,188.1 L2210.3,187.2 L2217.9,186.0 L2225.5,184.5 L2233.1,182.5 L2240.7,180.0 L2248.3,177.1 L2255.9,173.8 L2263.6,170.4 L2271.2,166.9 L2278.8,163.4 L2286.4,160.1 L2294.0,157.1 L2301.6,154.5 L2309.3,152.5 L2316.9,151.0 L2324.5,150.4 L2332.1,150.5 L2339.7,151.5 L2347.3,153.0 L2354.9,155.0 L2362.6,157.4 L2370.2,160.0 L2377.8,162.7 L2385.4,165.3 L2393.0,167.7 L2400.6,169.7 L2408.2,171.4 L2415.9,172.4 L2423.5,172.7 L2431.1,172.4 L2438.7,171.6 L2446.3,170.4 L2453.9,169.0 L2461.6,167.3 L2469.2,165.7 L2476.8,164.1 L2484.4,162.8 L2492.0,161.7 L2499.6,161.0 L2507.2,160.9 L2514.9,161.4 L2522.5,162.5 L2530.1,164.0 L2537.7,165.8 L2545.3,167.7 L2552.9,169.8 L2560.5,171.9 L2568.2,173.8 L2575.8,175.4 L2583.4,176.7 L2591.0,177.5 L2598.6,177.6 L2606.2,177.1 L2613.9,176.0 L2621.5,174.2 L2629.1,172.0 L2636.7,169.2 L2644.3,166.0 L2651.9,162.5 L2659.5,158.7 L2667.2,154.6 L2674.8,150.4 L2682.4,146.0 L2690.0,141.6 L2690,440 L40,440 Z" fill="url(#rot)"/><path d="M40.0,314.0 L47.6,317.7 L55.2,321.3 L62.8,324.7 L70.5,327.9 L78.1,330.9 L85.7,333.4 L93.3,335.5 L100.9,337.1 L108.5,338.2 L116.1,338.5 L123.8,338.1 L131.4,336.9 L139.0,334.9 L146.6,332.1 L154.2,328.7 L161.8,324.9 L169.5,320.8 L177.1,316.6 L184.7,312.3 L192.3,308.3 L199.9,304.5 L207.5,301.2 L215.1,298.4 L222.8,296.4 L230.4,295.3 L238.0,294.9 L245.6,295.2 L253.2,296.0 L260.8,297.2 L268.4,298.6 L276.1,300.2 L283.7,301.8 L291.3,303.2 L298.9,304.5 L306.5,305.3 L314.1,305.7 L321.8,305.4 L329.4,304.7 L337.0,303.4 L344.6,301.7 L352.2,299.7 L359.8,297.4 L367.4,294.8 L375.1,292.2 L382.7,289.4 L390.3,286.7 L397.9,284.0 L405.5,281.5 L413.1,279.1 L420.7,276.9 L428.4,274.9 L436.0,272.9 L443.6,271.1 L451.2,269.2 L458.8,267.4 L466.4,265.6 L474.1,263.7 L481.7,261.7 L489.3,259.6 L496.9,257.3 L504.5,254.8 L512.1,252.2 L519.7,249.5 L527.4,246.8 L535.0,244.0 L542.6,241.3 L550.2,238.6 L557.8,236.0 L565.4,233.6 L573.0,231.4 L580.7,229.5 L588.3,227.8 L595.9,226.5 L603.5,225.5 L611.1,224.9 L618.7,224.7 L626.4,225.0 L634.0,225.8 L641.6,227.1 L649.2,229.0 L656.8,231.5 L664.4,234.6 L672.0,238.3 L679.7,242.8 L687.3,247.9 L694.9,253.6 L702.5,259.7 L710.1,266.1 L717.7,272.6 L725.3,279.0 L733.0,285.2 L740.6,291.1 L748.2,296.5 L755.8,301.1 L763.4,305.0 L771.0,307.9 L778.6,309.7 L786.3,310.4 L793.9,310.3 L801.5,309.5 L809.1,307.9 L816.7,305.9 L824.3,303.5 L832.0,300.8 L839.6,298.0 L847.2,295.1 L854.8,292.4 L862.4,289.8 L870.0,287.6 L877.6,285.7 L885.3,284.1 L892.9,282.7 L900.5,281.4 L908.1,280.3 L915.7,279.3 L923.3,278.2 L930.9,277.2 L938.6,276.1 L946.2,274.9 L953.8,273.6 L961.4,272.0 L969.0,270.3 L976.6,268.5 L984.3,266.6 L991.9,264.7 L999.5,262.7 L1007.1,260.7 L1014.7,258.8 L1022.3,257.0 L1029.9,255.3 L1037.6,253.8 L1045.2,252.4 L1052.8,251.3 L1060.4,250.4 L1068.0,249.6 L1075.6,249.0 L1083.2,248.4 L1090.9,247.8 L1098.5,247.2 L1106.1,246.6 L1113.7,245.9 L1121.3,245.0 L1128.9,244.0 L1136.6,242.8 L1144.2,241.3 L1151.8,239.6 L1159.4,237.9 L1167.0,236.1 L1174.6,234.3 L1182.2,232.6 L1189.9,231.1 L1197.5,229.8 L1205.1,228.8 L1212.7,228.1 L1220.3,227.9 L1227.9,228.2 L1235.5,229.1 L1243.2,230.5 L1250.8,232.3 L1258.4,234.6 L1266.0,237.1 L1273.6,239.9 L1281.2,243.0 L1288.9,246.1 L1296.5,249.4 L1304.1,252.7 L1311.7,255.9 L1319.3,259.0 L1326.9,262.0 L1334.5,264.8 L1342.2,267.4 L1349.8,269.7 L1357.4,271.8 L1365.0,273.5 L1372.6,275.0 L1380.2,276.1 L1387.8,276.9 L1395.5,277.2 L1403.1,277.2 L1410.7,276.6 L1418.3,275.7 L1425.9,274.3 L1433.5,272.5 L1441.1,270.4 L1448.8,268.1 L1456.4,265.5 L1464.0,262.7 L1471.6,259.9 L1479.2,256.9 L1486.8,253.9 L1494.5,250.9 L1502.1,248.0 L1509.7,245.3 L1517.3,242.6 L1524.9,240.0 L1532.5,237.5 L1540.1,235.0 L1547.8,232.6 L1555.4,230.2 L1563.0,227.8 L1570.6,225.4 L1578.2,223.0 L1585.8,220.6 L1593.4,218.1 L1601.1,215.6 L1608.7,213.1 L1616.3,210.6 L1623.9,208.3 L1631.5,206.2 L1639.1,204.3 L1646.8,202.8 L1654.4,201.6 L1662.0,200.9 L1669.6,200.8 L1677.2,201.2 L1684.8,202.3 L1692.4,204.0 L1700.1,206.4 L1707.7,209.1 L1715.3,212.2 L1722.9,215.3 L1730.5,218.5 L1738.1,221.4 L1745.7,224.1 L1753.4,226.3 L1761.0,227.9 L1768.6,228.7 L1776.2,228.7 L1783.8,227.6 L1791.4,225.7 L1799.1,223.0 L1806.7,219.7 L1814.3,215.9 L1821.9,211.9 L1829.5,207.8 L1837.1,203.7 L1844.7,199.7 L1852.4,196.1 L1860.0,192.9 L1867.6,190.4 L1875.2,188.6 L1882.8,187.6 L1890.4,187.2 L1898.0,187.5 L1905.7,188.4 L1913.3,189.8 L1920.9,191.7 L1928.5,194.0 L1936.1,196.7 L1943.7,199.8 L1951.4,203.1 L1959.0,206.7 L1966.6,210.4 L1974.2,214.3 L1981.8,218.2 L1989.4,221.9 L1997.0,225.5 L2004.7,228.8 L2012.3,231.7 L2019.9,234.2 L2027.5,236.1 L2035.1,237.3 L2042.7,237.8 L2050.3,237.5 L2058.0,236.2 L2065.6,234.2 L2073.2,231.4 L2080.8,228.2 L2088.4,224.5 L2096.0,220.5 L2103.6,216.4 L2111.3,212.2 L2118.9,208.1 L2126.5,204.3 L2134.1,200.9 L2141.7,197.9 L2149.3,195.5 L2157.0,193.6 L2164.6,192.2 L2172.2,191.1 L2179.8,190.3 L2187.4,189.5 L2195.0,188.8 L2202.6,188.1 L2210.3,187.2 L2217.9,186.0 L2225.5,184.5 L2233.1,182.5 L2240.7,180.0 L2248.3,177.1 L2255.9,173.8 L2263.6,170.4 L2271.2,166.9 L2278.8,163.4 L2286.4,160.1 L2294.0,157.1 L2301.6,154.5 L2309.3,152.5 L2316.9,151.0 L2324.5,150.4 L2332.1,150.5 L2339.7,151.5 L2347.3,153.0 L2354.9,155.0 L2362.6,157.4 L2370.2,160.0 L2377.8,162.7 L2385.4,165.3 L2393.0,167.7 L2400.6,169.7 L2408.2,171.4 L2415.9,172.4 L2423.5,172.7 L2431.1,172.4 L2438.7,171.6 L2446.3,170.4 L2453.9,169.0 L2461.6,167.3 L2469.2,165.7 L2476.8,164.1 L2484.4,162.8 L2492.0,161.7 L2499.6,161.0 L2507.2,160.9 L2514.9,161.4 L2522.5,162.5 L2530.1,164.0 L2537.7,165.8 L2545.3,167.7 L2552.9,169.8 L2560.5,171.9 L2568.2,173.8 L2575.8,175.4 L2583.4,176.7 L2591.0,177.5 L2598.6,177.6 L2606.2,177.1 L2613.9,176.0 L2621.5,174.2 L2629.1,172.0 L2636.7,169.2 L2644.3,166.0 L2651.9,162.5 L2659.5,158.7 L2667.2,154.6 L2674.8,150.4 L2682.4,146.0 L2690.0,141.6" fill="none" stroke="#3b82f6" stroke-width="2"/>
</svg>
<span class="t" style="left:88.3px;top:465.5px;font-size:24.5px;line-height:24.5px;color:#72767c;letter-spacing:1.87px;">2024-0</span>
<span class="t" style="left:271.1px;top:465.5px;font-size:24.5px;line-height:24.5px;color:#72767c;letter-spacing:1.87px;">2024-0</span>
<span class="t" style="left:453.8px;top:465.5px;font-size:24.5px;line-height:24.5px;color:#72767c;letter-spacing:1.87px;">2024-0</span>
<span class="t" style="left:636.6px;top:465.5px;font-size:24.5px;line-height:24.5px;color:#72767c;letter-spacing:1.87px;">2024-0</span>
<span class="t" style="left:819.4px;top:465.5px;font-size:24.5px;line-height:24.5px;color:#72767c;letter-spacing:1.87px;">2024-0</span>
<span class="t" style="left:1002.1px;top:465.5px;font-size:24.5px;line-height:24.5px;color:#72767c;letter-spacing:1.87px;">2024-0</span>
<span class="t" style="left:1184.9px;top:465.5px;font-size:24.5px;line-height:24.5px;color:#72767c;letter-spacing:1.87px;">2024-0</span>
<span class="t" style="left:1367.6px;top:465.5px;font-size:24.5px;line-height:24.5px;color:#72767c;letter-spacing:1.87px;">2024-0</span>
<span class="t" style="left:1550.4px;top:465.5px;font-size:24.5px;line-height:24.5px;color:#72767c;letter-spacing:1.87px;">2024-0</span>
<span class="t" style="left:1733.2px;top:465.5px;font-size:24.5px;line-height:24.5px;color:#72767c;letter-spacing:1.87px;">2024-0</span>
<span class="t" style="left:1915.9px;top:465.5px;font-size:24.5px;line-height:24.5px;color:#72767c;letter-spacing:1.87px;">2024-0</span>
<span class="t" style="left:2098.7px;top:465.5px;font-size:24.5px;line-height:24.5px;color:#72767c;letter-spacing:1.87px;">2024-0</span>
<span class="t" style="left:2281.4px;top:465.5px;font-size:24.5px;line-height:24.5px;color:#72767c;letter-spacing:1.87px;">2024-0</span>
<span class="t" style="left:2464.2px;top:465.5px;font-size:24.5px;line-height:24.5px;color:#72767c;letter-spacing:1.87px;">2024-0</span>
<span class="t" style="left:2604.1px;top:465.5px;font-size:24.5px;line-height:24.5px;color:#72767c;letter-spacing:1.83px;">2024-0</span>
<span class="t" style="left:1340.9px;top:486.9px;font-size:20.5px;line-height:20.5px;color:#a0a3a8;letter-spacing:0.95px;">Date</span>
<span class="t" style="left:-72px;top:204.0999999999999px;width:200px;text-align:center;font-size:20.5px;line-height:21px;color:#96999e;transform:rotate(-90deg);letter-spacing:0.3px;">USD</span>
</section>
<section class="card" style="left:2734px;top:944px;width:1342px;height:260px;">
<h2 class="t" style="left:10.8px;top:9.5px;font-size:24.5px;line-height:24.5px;color:#9d9fa4;letter-spacing:0.43px;-webkit-text-stroke:.45px #9d9fa4;">Revenue vs $90K Target</h2>
<div class="abs" style="left:32px;top:94px;width:1274px;height:16px;border-radius:8px;background:#32363b;overflow:hidden;"><div style="width:1265px;height:16px;border-radius:8px;background:#10b981;"></div></div>
<span class="t" style="left:529.4px;top:129.2px;font-size:28.5px;line-height:28.5px;color:#10b981;font-weight:700;letter-spacing:4.08px;">99%</span>
<span class="t" style="left:609.8px;top:129.2px;font-size:28.5px;line-height:28.5px;color:#a0a3a8;letter-spacing:1.37px;">89388 / 90000</span>
</section>
<section class="card" style="left:2734px;top:1216px;width:1342px;height:260px;">
<h2 class="t" style="left:10.8px;top:9.5px;font-size:24.5px;line-height:24.5px;color:#9d9fa4;letter-spacing:0.35px;-webkit-text-stroke:.45px #9d9fa4;">New Customers vs 150 Target</h2>
<div class="abs" style="left:32px;top:94px;width:1274px;height:16px;border-radius:8px;background:#32363b;overflow:hidden;"><div style="width:1274px;height:16px;border-radius:8px;background:#8b5cf6;"></div></div>
<span class="t" style="left:562.2px;top:129.2px;font-size:28.5px;line-height:28.5px;color:#8b5cf6;font-weight:700;letter-spacing:1.92px;">100%</span>
<span class="t" style="left:655.6px;top:129.2px;font-size:28.5px;line-height:28.5px;color:#a0a3a8;letter-spacing:0.09px;">160 / 150</span>
</section>
<section class="card" style="left:14px;top:1488px;width:2018px;height:532px;">
<h2 class="t" style="left:10.3px;top:9.5px;font-size:24.5px;line-height:24.5px;color:#9d9fa4;letter-spacing:0.58px;-webkit-text-stroke:.45px #9d9fa4;">Revenue by Order Status</h2>
<svg class="ic" style="left:0;top:0" width="2014" height="528" viewBox="0 0 2014 528"><defs><linearGradient id="bg" x1="0" y1="0" x2="0" y2="1"><stop offset="0" stop-color="#f97316" stop-opacity=".85"/><stop offset="1" stop-color="#f97316" stop-opacity=".06"/></linearGradient></defs>
<rect x="58.0" y="46.0" width="398.0" height="414.0" fill="url(#bg)"/>
<rect x="557.3" y="277.4" width="398.4" height="182.6" fill="url(#bg)"/>
<rect x="1056.7" y="304.6" width="398.3" height="155.4" fill="url(#bg)"/>
<rect x="1556.0" y="311.0" width="399.0" height="149.0" fill="url(#bg)"/>
</svg>
</section>
<section class="card" style="left:2054px;top:1488px;width:2018px;height:532px;">
<h2 class="t" style="left:10.4px;top:9.5px;font-size:24.5px;line-height:24.5px;color:#9d9fa4;letter-spacing:0.69px;-webkit-text-stroke:.45px #9d9fa4;">Sales by Category</h2>
<svg class="ic" style="left:0;top:0" width="2014" height="528" viewBox="0 0 2014 528">
<path d="M1085.30,263.60 A203,203 0 0 0 705.97,163.02 L794.57,213.56 A101,101 0 0 1 983.30,263.60 Z" fill="#6366f1" stroke="#15181b" stroke-width="4" stroke-linejoin="round"/>
<path d="M705.97,163.02 A203,203 0 0 0 896.64,466.09 L889.43,364.35 A101,101 0 0 1 794.57,213.56 Z" fill="#6d70f2" stroke="#15181b" stroke-width="4" stroke-linejoin="round"/>
<path d="M896.64,466.09 A203,203 0 0 0 1025.34,407.64 L953.47,335.27 A101,101 0 0 1 889.43,364.35 Z" fill="#787bf3" stroke="#15181b" stroke-width="4" stroke-linejoin="round"/>
<path d="M1025.34,407.64 A203,203 0 0 0 1058.28,364.79 L969.86,313.95 A101,101 0 0 1 953.47,335.27 Z" fill="#8285f4" stroke="#15181b" stroke-width="4" stroke-linejoin="round"/>
<path d="M1058.28,364.79 A203,203 0 0 0 1068.60,344.22 L974.99,303.71 A101,101 0 0 1 969.86,313.95 Z" fill="#8d8ff6" stroke="#15181b" stroke-width="4" stroke-linejoin="round"/>
<path d="M1068.60,344.22 A203,203 0 0 0 1075.47,325.99 L978.41,294.64 A101,101 0 0 1 974.99,303.71 Z" fill="#979af7" stroke="#15181b" stroke-width="4" stroke-linejoin="round"/>
<path d="M1075.47,325.99 A203,203 0 0 0 1080.86,305.81 L981.09,284.60 A101,101 0 0 1 978.41,294.64 Z" fill="#a2a4f8" stroke="#15181b" stroke-width="4" stroke-linejoin="round"/>
<path d="M1080.86,305.81 A203,203 0 0 0 1083.95,286.93 L982.63,275.21 A101,101 0 0 1 981.09,284.60 Z" fill="#acaef9" stroke="#15181b" stroke-width="4" stroke-linejoin="round"/>
<path d="M1083.95,286.93 A203,203 0 0 0 1085.06,273.52 L983.18,268.53 A101,101 0 0 1 982.63,275.21 Z" fill="#b6b9fa" stroke="#15181b" stroke-width="4" stroke-linejoin="round"/>
<path d="M1085.06,273.52 A203,203 0 0 0 1085.22,269.27 L983.26,266.42 A101,101 0 0 1 983.18,268.53 Z" fill="#c1c3fc" stroke="#15181b" stroke-width="4" stroke-linejoin="round"/>
<path d="M1085.22,269.27 A203,203 0 0 0 1085.28,266.08 L983.29,264.83 A101,101 0 0 1 983.26,266.42 Z" fill="#cbcdfd" stroke="#15181b" stroke-width="4" stroke-linejoin="round"/>
<path d="M1085.28,266.08 A203,203 0 0 0 1085.30,264.31 L983.30,263.95 A101,101 0 0 1 983.29,264.83 Z" fill="#d6d8fe" stroke="#15181b" stroke-width="4" stroke-linejoin="round"/>
<path d="M1085.30,264.31 A203,203 0 0 0 1085.30,263.60 L983.30,263.60 A101,101 0 0 1 983.30,263.95 Z" fill="#e0e2ff" stroke="#15181b" stroke-width="4" stroke-linejoin="round"/>
</svg>
<div class="abs" style="left:1764px;top:56px;width:16px;height:16px;border-radius:4.5px;background:#6366f1;"></div>
<span class="t" style="left:1790.9px;top:52.1px;font-size:25px;line-height:25px;color:#a1a5ab;letter-spacing:0.58px;">Laptops</span>
<div class="abs" style="left:1764px;top:96px;width:16px;height:16px;border-radius:4.5px;background:#6d70f2;"></div>
<span class="t" style="left:1790.9px;top:92.1px;font-size:25px;line-height:25px;color:#a1a5ab;letter-spacing:0.32px;">Smartphones</span>
<div class="abs" style="left:1764px;top:136px;width:16px;height:16px;border-radius:4.5px;background:#787bf3;"></div>
<span class="t" style="left:1790.9px;top:132.1px;font-size:25px;line-height:25px;color:#a1a5ab;letter-spacing:0.26px;">Headphones</span>
<div class="abs" style="left:1764px;top:176px;width:16px;height:16px;border-radius:4.5px;background:#8285f4;"></div>
<span class="t" style="left:1790.9px;top:172.1px;font-size:25px;line-height:25px;color:#a1a5ab;letter-spacing:0.69px;">Sports</span>
<div class="abs" style="left:1764px;top:216px;width:16px;height:16px;border-radius:4.5px;background:#8d8ff6;"></div>
<span class="t" style="left:1790.9px;top:212.1px;font-size:25px;line-height:25px;color:#a1a5ab;letter-spacing:0.73px;">Clothing</span>
<div class="abs" style="left:1764px;top:256px;width:16px;height:16px;border-radius:4.5px;background:#979af7;"></div>
<span class="t" style="left:1790.9px;top:252.1px;font-size:25px;line-height:25px;color:#a1a5ab;letter-spacing:0.43px;">Electronics</span>
<div class="abs" style="left:1764px;top:296px;width:16px;height:16px;border-radius:4.5px;background:#a2a4f8;"></div>
<span class="t" style="left:1790.9px;top:292.1px;font-size:25px;line-height:25px;color:#a1a5ab;letter-spacing:0.55px;">Men's Clothing</span>
<div class="abs" style="left:1764px;top:336px;width:16px;height:16px;border-radius:4.5px;background:#acaef9;"></div>
<span class="t" style="left:1790.9px;top:332.1px;font-size:25px;line-height:25px;color:#a1a5ab;letter-spacing:0.43px;">Women's Clothing</span>
<div class="abs" style="left:1764px;top:376px;width:16px;height:16px;border-radius:4.5px;background:#b6b9fa;"></div>
<span class="t" style="left:1790.9px;top:372.1px;font-size:25px;line-height:25px;color:#a1a5ab;letter-spacing:0.09px;">Home &amp; Garden</span>
<div class="abs" style="left:1764px;top:416px;width:16px;height:16px;border-radius:4.5px;background:#c1c3fc;"></div>
<span class="t" style="left:1790.9px;top:412.1px;font-size:25px;line-height:25px;color:#a1a5ab;letter-spacing:0.75px;">Fiction</span>
<div class="abs" style="left:1764px;top:456px;width:16px;height:16px;border-radius:4.5px;background:#cbcdfd;"></div>
<span class="t" style="left:1790.9px;top:452.1px;font-size:25px;line-height:25px;color:#a1a5ab;letter-spacing:0.68px;">Non-Fiction</span>
</section>
</main>
</body>
</html>
